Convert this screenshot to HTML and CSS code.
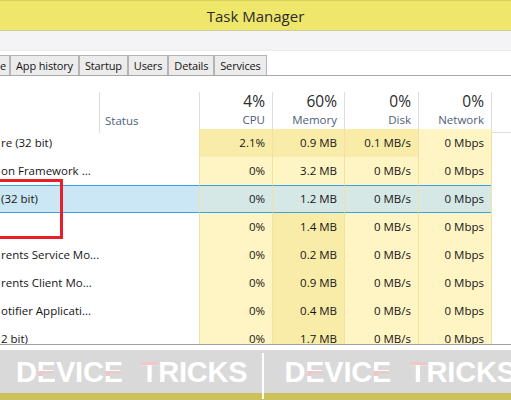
FILE: index.html
```html
<!DOCTYPE html>
<html>
<head>
<meta charset="utf-8">
<link rel="stylesheet" href="styles.css">
</head>
<body>
<div class="window">
  <div class="titlebar">Task Manager</div>
  <div class="menubar"></div>
  <div class="tabs">
    <div class="tab first">e</div>
    <div class="tab">App history</div>
    <div class="tab">Startup</div>
    <div class="tab">Users</div>
    <div class="tab">Details</div>
    <div class="tab">Services</div>
  </div>
  <div class="table">
    <div class="head">
      <div class="hc name"></div>
      <div class="hc status"><span class="lbl">Status</span></div>
      <div class="hc num"><span class="pct">4%</span><span class="lbl">CPU</span></div>
      <div class="hc num"><span class="pct">60%</span><span class="lbl">Memory</span></div>
      <div class="hc num"><span class="pct">0%</span><span class="lbl">Disk</span></div>
      <div class="hc num"><span class="pct">0%</span><span class="lbl">Network</span></div>
      <div class="hc rest"></div>
    </div>
    <div class="rows">
      <div class="row">
        <div class="c name">re (32 bit)</div><div class="c status"></div>
        <div class="c d hot">2.1%</div><div class="c d hot">0.9 MB</div><div class="c d hot">0.1 MB/s</div><div class="c d">0 Mbps</div><div class="c rest"></div>
      </div>
      <div class="row">
        <div class="c name">on Framework ...</div><div class="c status"></div>
        <div class="c d">0%</div><div class="c d">3.2 MB</div><div class="c d">0 MB/s</div><div class="c d">0 Mbps</div><div class="c rest"></div>
      </div>
      <div class="row sel">
        <div class="c name">(32 bit)</div><div class="c status"></div>
        <div class="c d">0%</div><div class="c d">1.2 MB</div><div class="c d">0 MB/s</div><div class="c d">0 Mbps</div><div class="c rest"></div>
      </div>
      <div class="row">
        <div class="c name"></div><div class="c status"></div>
        <div class="c d">0%</div><div class="c d hot">1.4 MB</div><div class="c d">0 MB/s</div><div class="c d">0 Mbps</div><div class="c rest"></div>
      </div>
      <div class="row">
        <div class="c name">rents Service Mo...</div><div class="c status"></div>
        <div class="c d">0%</div><div class="c d hot">0.2 MB</div><div class="c d">0 MB/s</div><div class="c d">0 Mbps</div><div class="c rest"></div>
      </div>
      <div class="row">
        <div class="c name">rents Client Mo...</div><div class="c status"></div>
        <div class="c d">0%</div><div class="c d hot">0.9 MB</div><div class="c d">0 MB/s</div><div class="c d">0 Mbps</div><div class="c rest"></div>
      </div>
      <div class="row">
        <div class="c name">otifier Applicati...</div><div class="c status"></div>
        <div class="c d">0%</div><div class="c d hot">0.4 MB</div><div class="c d">0 MB/s</div><div class="c d">0 Mbps</div><div class="c rest"></div>
      </div>
      <div class="row">
        <div class="c name">2 bit)</div><div class="c status"></div>
        <div class="c d">0%</div><div class="c d hot">1.7 MB</div><div class="c d">0 MB/s</div><div class="c d">0 Mbps</div><div class="c rest"></div>
      </div>
    </div>
    <div class="highlight"></div>
  </div>
  <div class="gap"></div>
  <div class="band">
    <div class="mark">D<span class="e">E</span>VIC<span class="e">E</span> <span class="t">T</span>RICKS</div>
    <div class="mark second">D<span class="e">E</span>VIC<span class="e">E</span> <span class="t">T</span>RICKS</div>
    <div class="divider"></div>
  </div>
  <div class="footer"></div>
</div>
</body>
</html>
```
FILE: styles.css
```css
html, body {
  margin: 0;
  padding: 0;
  background: #ffffff;
}
.window {
  width: 511px;
  height: 400px;
  overflow: hidden;
  position: relative;
  font-family: "Open Sans", "Noto Sans", sans-serif;
  color: #1a1a1a;
}
.titlebar {
  height: 29px;
  border-top: 1px solid #d9d15e;
  border-bottom: 1px solid #cfcca2;
  background: #efe66c;
  display: flex;
  align-items: center;
  justify-content: center;
  font-size: 15px;
  color: #2b2b2b;
}
.menubar {
  height: 19px;
  background: #f4f4f6;
  border-bottom: 1px solid #eaeaea;
  margin-bottom: 4px;
}
.tabs {
  display: flex;
  height: 20px;
  border-bottom: 1px solid #a8a8a8;
}
.tab {
  height: 19px;
  border: 1px solid #b4b4b4;
  border-bottom: none;
  background: #ececec;
  padding: 0 5px;
  font-size: 11px;
  letter-spacing: -0.15px;
  line-height: 19px;
  color: #141414;
}
.tab.first {
  border-left: none;
  padding: 0 2px 0 0;
  width: 7px;
  overflow: hidden;
}
.table {
  position: relative;
  border-bottom: 1px solid #a0a0a0;
  overflow: hidden;
  padding-top: 16px;
  box-sizing: border-box;
  height: 269px;
}
.head, .row {
  display: grid;
  grid-template-columns: 99px 100px 73px 72px 74px 73px 20px;
}
.head {
  height: 37px;
}
.hc {
  display: flex;
  flex-direction: column;
  justify-content: flex-end;
  align-items: flex-end;
  padding: 0 7px 5px 0;
  border-left: 1px solid #dedede;
}
.hc.name {
  border-left: none;
}
.hc.status {
  align-items: flex-start;
  padding-left: 5px;
}
.hc.num, .hc.rest {
  border-bottom: 1px solid #dedede;
}
.pct {
  font-size: 15.5px;
  line-height: 18px;
  color: #2b2b2b;
  margin-bottom: 3px;
}
.lbl {
  font-size: 11.5px;
  line-height: 14px;
  color: #4e6079;
}
.row {
  height: 28px;
}
.c {
  font-size: 11.5px;
  line-height: 28px;
  white-space: nowrap;
  overflow: hidden;
  color: #151515;
}
.c.name {
  padding-left: 1px;
}
.c.d {
  background: #fff4c4;
  border-left: 1px solid #f1e2a4;
  text-align: right;
  padding-right: 7px;
}
.c.d.hot {
  background: #f9eca8;
}
.c.rest {
  border-left: 1px solid #f1e2a4;
}
.row.sel .c {
  border-top: 1px solid #3aa3dc;
  border-bottom: 1px solid #3aa3dc;
  line-height: 26px;
  background: #cbe7f6;
}
.row.sel .c.d {
  background: #d6e8e6;
}
.row.sel .c.rest {
  background: #ffffff;
  border-top: none;
  border-bottom: none;
}
.highlight {
  position: absolute;
  left: -6px;
  top: 103px;
  width: 63px;
  height: 54px;
  border: 3px solid #e81e28;
}
.gap {
  height: 5px;
}
.band {
  position: relative;
  height: 43px;
  background: #d9d9d9;
  display: flex;
  align-items: center;
  padding-left: 16px;
  gap: 37px;
  white-space: nowrap;
}
.mark {
  font-family: "Liberation Sans", Arial, sans-serif;
  font-weight: bold;
  font-size: 29px;
  color: #ffffff;
  letter-spacing: -0.2px;
  word-spacing: 10px;
  line-height: 30px;
}
.mark .t {
  background: linear-gradient(#f2c6c9 0 28%, #ffffff 28% 100%);
  -webkit-background-clip: text;
  background-clip: text;
  color: transparent;
}
.mark .e {
  background: linear-gradient(#ffffff 0 47%, #f2c6c9 47% 62%, #ffffff 62% 100%);
  -webkit-background-clip: text;
  background-clip: text;
  color: transparent;
}
.divider {
  position: absolute;
  left: 262px;
  top: 3px;
  width: 2px;
  height: 46px;
  background: #ffffff;
}
.footer {
  height: 7px;
  background: #cdc25a;
}
```
